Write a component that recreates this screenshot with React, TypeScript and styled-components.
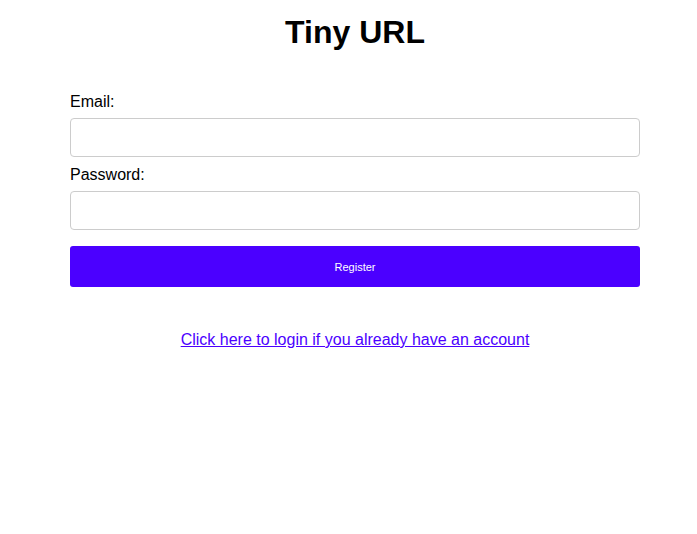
import React from "react";
import styled, { createGlobalStyle } from "styled-components";

const Global = createGlobalStyle`
  html, body { margin: 0; padding: 0; background: #fff; }
  body { font-family: "Liberation Sans", Arial, Helvetica, sans-serif; color: #000; }
`;

const Page = styled.div`
  display: flex;
  flex-direction: column;
  padding: 14px 57px 0 70px;
`;

const Title = styled.h1`
  margin: 0 0 42px;
  font-size: 32px;
  line-height: 37px;
  font-weight: 700;
  text-align: center;
`;

const Form = styled.form`
  display: flex;
  flex-direction: column;
`;

const Label = styled.label`
  display: block;
  font-size: 16px;
  line-height: 18px;
  margin: 0 0 7px;
`;

const Input = styled.input`
  box-sizing: border-box;
  width: 100%;
  height: 39px;
  margin: 0 0 9px;
  padding: 0 10px;
  border: 1px solid #cccccc;
  border-radius: 4px;
  font-size: 16px;
  font-family: inherit;
  outline: none;
  &:last-of-type { margin-bottom: 16px; }
`;

const Button = styled.button`
  height: 41px;
  width: 100%;
  border: none;
  border-radius: 3px;
  background: #4b00ff;
  color: #fff;
  font-family: "Liberation Sans", Arial, sans-serif;
  font-size: 11px;
  cursor: pointer;
`;

const LinkRow = styled.div`
  margin-top: 44px;
  text-align: center;
  font-size: 16px;
  line-height: 18px;
`;

const Link = styled.a`
  color: #4b00ff;
  text-decoration: underline;
`;

export default function App() {
  return (
    <>
      <Global />
      <Page>
        <Title>Tiny URL</Title>
        <Form onSubmit={(e) => e.preventDefault()}>
          <Label htmlFor="email">Email:</Label>
          <Input id="email" type="email" />
          <Label htmlFor="password">Password:</Label>
          <Input id="password" type="password" />
          <Button type="submit">Register</Button>
        </Form>
        <LinkRow>
          <Link href="#login">Click here to login if you already have an account</Link>
        </LinkRow>
      </Page>
    </>
  );
}
